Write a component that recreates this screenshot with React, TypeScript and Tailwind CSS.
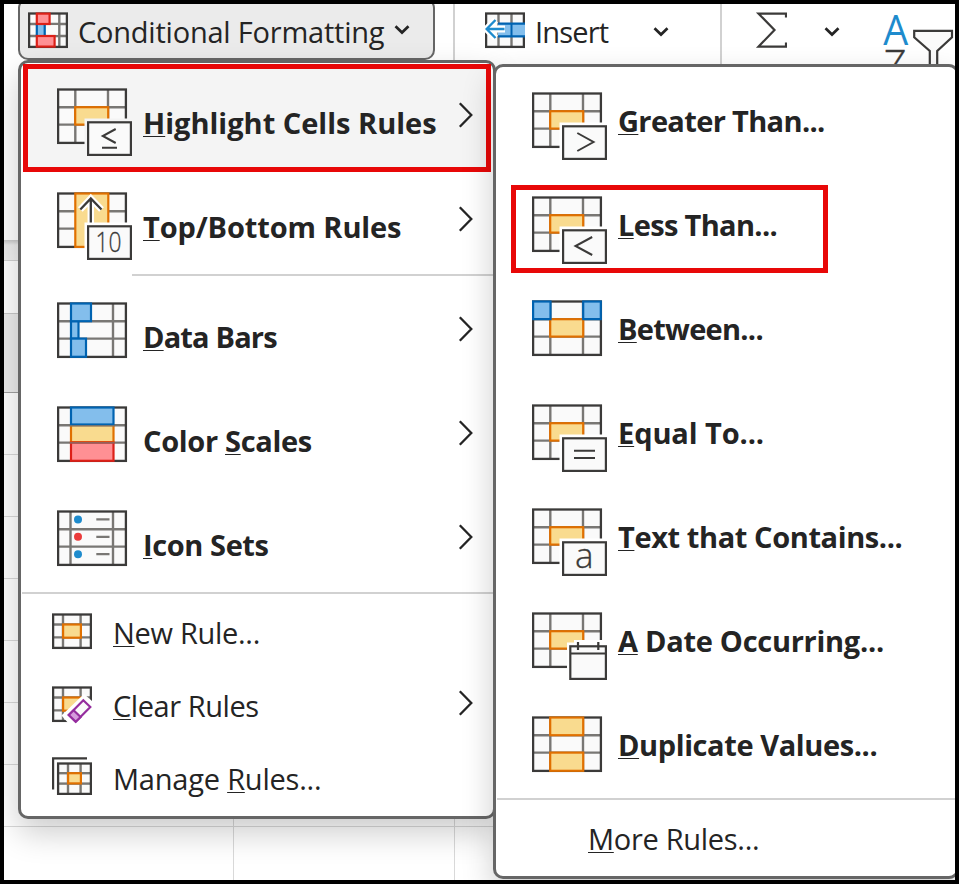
import type { ReactNode } from "react";
import { clsx } from "clsx";

const DARK = "#3b3a39";
const GRAY = "#797774";
const PAPER = "#fafafa";
const ORANGE = "#e07000";
const ORANGE_FILL = "#f9db8f";
const BLUE = "#0063b1";
const BLUE_FILL = "#83beec";
const RED = "#dc2018";
const RED_FILL = "#ff9094";

type CellProps = { x: number; y: number; w: number; h: number; stroke: string; fill: string };

function Cell({ x, y, w, h, stroke, fill }: CellProps) {
  return <rect x={x} y={y} width={w} height={h} stroke={stroke} fill={fill} strokeWidth={2.2} />;
}

// Table outline with grid lines at the given positions
function Grid({ w, h, v, hz }: { w: number; h: number; v: number[]; hz: number[] }) {
  return (
    <>
      <rect x={1.1} y={1.5} width={w - 2.2} height={h - 2.6} fill={PAPER} />
      {v.map((x) => (
        <path key={x} d={`M${x} 2V${h - 2}`} stroke={GRAY} strokeWidth={2.4} />
      ))}
      {hz.map((y) => (
        <path key={y} d={`M2 ${y}H${w - 2}`} stroke={GRAY} strokeWidth={2.4} />
      ))}
      <rect x={1.1} y={1.5} width={w - 2.2} height={h - 2.6} fill="none" stroke={DARK} strokeWidth={2.3} />
    </>
  );
}

function BigIcon({ children }: { children: ReactNode }) {
  return (
    <svg width={75} height={69} viewBox="0 0 75 69" fill="none" className="shrink-0">
      {children}
    </svg>
  );
}

function SmallIcon({ children }: { children: ReactNode }) {
  return (
    <svg width={40} height={38} viewBox="0 0 40 38" fill="none" className="shrink-0">
      {children}
    </svg>
  );
}

function RuleIcon({ children, halo = "#fff" }: { children: ReactNode; halo?: string }) {
  return (
    <BigIcon>
      <Grid w={70} h={56} v={[18.3, 51]} hz={[19.2, 36.6]} />
      <Cell x={18.2} y={19.2} w={33} h={17.4} stroke={ORANGE} fill={ORANGE_FILL} />
      <rect x={27.5} y={30.5} width={47.5} height={38.5} fill={halo} />
      <Cell x={31.1} y={34.3} w={42.8} h={32.6} stroke={DARK} fill={PAPER} />
      {children}
    </BigIcon>
  );
}

function Sign({ d }: { d: string }) {
  return <path d={d} stroke={DARK} strokeWidth={2} />;
}

function TopBottomIcon() {
  return (
    <BigIcon>
      <Grid w={70} h={56} v={[]} hz={[19.2, 36.6]} />
      <Cell x={18.3} y={1.5} w={33} h={53.4} stroke={ORANGE} fill={ORANGE_FILL} />
      <path d="M33.8 34V6.5M23.3 17.5L33.8 6.5L44.5 17.5" stroke="#fff" strokeWidth={6.5} />
      <path d="M33.8 31V6.5M23.3 17.5L33.8 6.5L44.5 17.5" stroke={DARK} strokeWidth={2.3} />
      <rect x={27.5} y={30.5} width={47.5} height={38.5} fill="#fff" />
      <Cell x={31.1} y={34.3} w={42.8} h={32.6} stroke={DARK} fill={PAPER} />
      <text x={38.5} y={60} fontSize={27} textLength={26} lengthAdjust="spacingAndGlyphs" fill={DARK} stroke={DARK} strokeWidth={0.3} className="font-light">
        10
      </text>
    </BigIcon>
  );
}

function DataBarsIcon() {
  return (
    <BigIcon>
      <Grid w={70} h={56} v={[56]} hz={[19.2, 36.6]} />
      <Cell x={14} y={19.2} w={7.5} h={17.4} stroke={BLUE} fill={BLUE_FILL} />
      <Cell x={14} y={1.5} w={20} h={17.7} stroke={BLUE} fill={BLUE_FILL} />
      <Cell x={14} y={36.6} w={15} h={18.2} stroke={BLUE} fill={BLUE_FILL} />
    </BigIcon>
  );
}

function ColorScalesIcon() {
  return (
    <BigIcon>
      <Grid w={70} h={56} v={[]} hz={[19.2, 36.6]} />
      <Cell x={14} y={19.2} w={42.5} h={17} stroke={ORANGE} fill={ORANGE_FILL} />
      <Cell x={14} y={1.5} w={42.5} h={17} stroke={BLUE} fill={BLUE_FILL} />
      <Cell x={14} y={36.6} w={42.5} h={18.2} stroke={RED} fill={RED_FILL} />
      <path d="M12.8 19.8H57.6M12.8 36.9H57.6" stroke={GRAY} strokeWidth={1.2} />
    </BigIcon>
  );
}

function IconSetsIcon() {
  return (
    <BigIcon>
      <Grid w={70} h={56} v={[13.5, 56]} hz={[19.2, 36.6]} />
      <circle cx={21} cy={9.4} r={4} fill="#1e8bcd" />
      <circle cx={21} cy={26.8} r={4} fill="#eb3b3b" />
      <circle cx={21} cy={44.2} r={4} fill="#1e8bcd" />
      <path d="M39.3 9.4H52.5M39.3 26.8H52.5M39.3 44.2H52.5" stroke={GRAY} strokeWidth={2.2} />
    </BigIcon>
  );
}

function BetweenIcon() {
  return (
    <BigIcon>
      <Grid w={70} h={56} v={[18.3, 51]} hz={[19.2, 36.6]} />
      <Cell x={18.2} y={19.2} w={33} h={17.4} stroke={ORANGE} fill={ORANGE_FILL} />
      <Cell x={1.1} y={1.5} w={17.4} h={17.6} stroke={BLUE} fill={BLUE_FILL} />
      <Cell x={51.2} y={1.5} w={17.6} h={17.6} stroke={BLUE} fill={BLUE_FILL} />
    </BigIcon>
  );
}

function DateIcon() {
  return (
    <BigIcon>
      <Grid w={70} h={56} v={[18.3, 51]} hz={[19.2, 36.6]} />
      <Cell x={18.2} y={19.2} w={33} h={17.4} stroke={ORANGE} fill={ORANGE_FILL} />
      <path d="M35 69V30.5H42V28H75V69Z" fill="#fff" />
      <Cell x={38.3} y={34.3} w={35.6} h={32.6} stroke={DARK} fill={PAPER} />
      <path d="M38 41.5H74M46 30V38M66.3 30V38" stroke={DARK} strokeWidth={2.2} />
    </BigIcon>
  );
}

function DuplicateIcon() {
  return (
    <BigIcon>
      <Grid w={70} h={56} v={[18.3, 51]} hz={[19.2, 36.6]} />
      <Cell x={18.2} y={1.5} w={33} h={17.7} stroke={ORANGE} fill={ORANGE_FILL} />
      <Cell x={18.2} y={36.6} w={33} h={18.2} stroke={ORANGE} fill={ORANGE_FILL} />
    </BigIcon>
  );
}

function NewRuleIcon() {
  return (
    <SmallIcon>
      <Grid w={40} h={36} v={[11, 28.6]} hz={[11.5, 24.4]} />
      <Cell x={11.1} y={11.5} w={17.8} h={13.2} stroke={ORANGE} fill={ORANGE_FILL} />
    </SmallIcon>
  );
}

function ClearRulesIcon() {
  return (
    <SmallIcon>
      <Grid w={40} h={36} v={[11, 28.6]} hz={[11.5, 24.4]} />
      <Cell x={11.1} y={11.5} w={17.8} h={13.2} stroke={ORANGE} fill={ORANGE_FILL} />
      <path d="M9.5 29.5L32 8L40 15V38H17Z" fill="#fff" />
      <path d="M31.3 14.3L38.3 21L23.7 35.8L16.8 29Z" fill={PAPER} stroke="#952d9e" strokeWidth={2.2} />
      <path d="M21.6 24.3L28.6 31L23.7 35.8L16.8 29Z" fill="#d59bdc" stroke="#952d9e" strokeWidth={2.2} />
    </SmallIcon>
  );
}

function ManageRulesIcon() {
  return (
    <SmallIcon>
      <path d="M1.1 32.5V1.4H35" stroke={DARK} strokeWidth={2.2} />
      <g transform="translate(5 5)">
        <Grid w={35} h={33} v={[11, 23.6]} hz={[11.2, 21.6]} />
        <Cell x={11.1} y={11.2} w={12.8} h={10.2} stroke={ORANGE} fill={ORANGE_FILL} />
      </g>
    </SmallIcon>
  );
}

function FormattingIcon() {
  return (
    <SmallIcon>
      <Grid w={40} h={36} v={[31.3]} hz={[12, 24]} />
      <rect x={8} y={13} width={9.5} height={10} fill={BLUE_FILL} />
      <path d="M8.8 12V24M16.7 12V24" stroke={BLUE} strokeWidth={2.2} />
      <rect x={18} y={13.1} width={12} height={9.8} fill={PAPER} />
      <Cell x={8.8} y={1.6} w={12.8} h={10.4} stroke={RED} fill={RED_FILL} />
      <Cell x={8.8} y={24} w={17.8} h={10.6} stroke={RED} fill={RED_FILL} />
    </SmallIcon>
  );
}

function InsertIcon() {
  return (
    <SmallIcon>
      <Grid w={40} h={36} v={[13.5, 26.5]} hz={[]} />
      <rect x={13} y={11} width={27} height={13.5} fill={BLUE_FILL} />
      <path d="M26.5 12V24" stroke={BLUE} strokeWidth={2} />
      <path d="M13 11.6H40M13 24.4H40" stroke={BLUE} strokeWidth={2.3} />
      <path d="M0 17H20M10.5 8L1.6 17L10.5 26" stroke="#fff" strokeWidth={7} />
      <path d="M1.6 17H19.5M10.5 8L1.6 17L10.5 26" stroke="#1e8bcd" strokeWidth={2.4} />
    </SmallIcon>
  );
}

function SigmaIcon() {
  return (
    <svg width={32} height={38} viewBox="0 0 32 38" fill="none" className="shrink-0">
      <path d="M31 5.5V1.6H3.5L19.5 18L3.5 34.6H31V30.5" stroke={DARK} strokeWidth={2.2} />
    </svg>
  );
}

function SortFilterIcon() {
  return (
    <svg width={72} height={56} viewBox="0 0 72 56" fill="none" className="shrink-0 overflow-visible">
      <text x={0.3} y={32.5} fontSize={42} textLength={25} lengthAdjust="spacingAndGlyphs" fill="#1e8bcd">
        A
      </text>
      <text x={0.5} y={67.5} fontSize={42} textLength={23} lengthAdjust="spacingAndGlyphs" fill={DARK} stroke={DARK} strokeWidth={0.4} className="font-light">
        Z
      </text>
      <path d="M31.2 18.8H69V25.3L54.2 39V60H46.8V39L31.2 25.3Z" fill={PAPER} stroke={DARK} strokeWidth={2.2} />
    </svg>
  );
}

function ChevronDown() {
  return (
    <svg width={16} height={12} viewBox="0 0 16 12" fill="none" className="shrink-0">
      <path d="M1.5 2.2L8 8.5L14.5 2.2" stroke="#242424" strokeWidth={2.7} />
    </svg>
  );
}

function ChevronRight({ className }: { className?: string }) {
  return (
    <svg width={16} height={26} viewBox="0 0 16 26" fill="none" className={clsx("ml-auto shrink-0", className)}>
      <path d="M1.8 1.3L13.3 13L1.8 24.7" stroke="#242424" strokeWidth={2.3} />
    </svg>
  );
}

// The letter that follows "&" is the access key and gets the underline
function Label({ text, className }: { text: string; className?: string }) {
  const at = text.indexOf("&");
  return (
    <span className={clsx("whitespace-nowrap leading-10", className)}>
      {text.slice(0, at)}
      <span className="underline decoration-1 underline-offset-2 [text-decoration-skip-ink:none]">{text[at + 1]}</span>
      {text.slice(at + 2)}
    </span>
  );
}

type Entry = { label: string; icon: ReactNode; tracking: string };

const barItems: Entry[] = [
  { label: "&Data Bars", icon: <DataBarsIcon />, tracking: "tracking-[-0.83px]" },
  { label: "Color &Scales", icon: <ColorScalesIcon />, tracking: "tracking-[-0.32px]" },
  { label: "&Icon Sets", icon: <IconSetsIcon />, tracking: "tracking-[-0.4px]" },
];

const compareItems: Entry[] = [
  { label: "&Greater Than...", icon: <RuleIcon><Sign d="M45.3 41L61.5 50L45.3 59" /></RuleIcon>, tracking: "tracking-[-0.65px]" },
  { label: "&Less Than...", icon: <RuleIcon><Sign d="M60.2 41L43.5 50L60.2 59" /></RuleIcon>, tracking: "tracking-[-0.67px]" },
  { label: "&Between...", icon: <BetweenIcon />, tracking: "tracking-[-0.72px]" },
  { label: "&Equal To...", icon: <RuleIcon><Sign d="M42 46.7H63M42 54H63" /></RuleIcon>, tracking: "tracking-[-0.1px]" },
  {
    label: "&Text that Contains...",
    icon: (
      <RuleIcon>
        <text x={43} y={60} fontSize={35} fill={DARK} stroke={DARK} strokeWidth={0.3} className="font-light">
          a
        </text>
      </RuleIcon>
    ),
    tracking: "tracking-[-0.4px]",
  },
  { label: "&A Date Occurring...", icon: <DateIcon />, tracking: "tracking-[-0.28px]" },
  { label: "&Duplicate Values...", icon: <DuplicateIcon />, tracking: "tracking-[-0.4px]" },
];

function Ribbon() {
  return (
    <div className="flex h-[236px] items-start bg-white">
      <div className="-mt-1.5 ml-3.5 flex h-[62px] w-[417px] items-start rounded-[10px] border-2 border-[#666] bg-[#ebebeb] pl-2 pt-3">
        <FormattingIcon />
        <span className="ml-2.5 w-[306px] whitespace-nowrap leading-10 tracking-[-0.22px]">Conditional Formatting</span>
        <div className="ml-2.5 mt-3">
          <ChevronDown />
        </div>
      </div>
      <div className="ml-[18px] h-16 w-0.5 bg-[#d1d1d1]" />
      <div className="ml-[30px] flex pt-2">
        <InsertIcon />
        <span className="ml-2.5 w-[118px] leading-10 tracking-[-0.8px]">Insert</span>
        <div className="mt-3.5">
          <ChevronDown />
        </div>
      </div>
      <div className="ml-[51px] h-16 w-0.5 bg-[#d1d1d1]" />
      <div className="ml-[33px] flex pt-2">
        <SigmaIcon />
        <div className="ml-[37px] mt-3.5">
          <ChevronDown />
        </div>
      </div>
      <div className="ml-[43px] pt-2">
        <SortFilterIcon />
      </div>
    </div>
  );
}

function Sheet() {
  return (
    <div className="flex flex-col">
      <div className="h-[21px] border-b border-[#d1d1d1] bg-gradient-to-b from-[#c8c8c8] via-[#ececec] via-25% to-[#f0f0f0]" />
      <div className="h-[53px] border-b border-[#c8c8c8] bg-white" />
      <div className="h-[79px] border-b border-[#a0a0a0] bg-[#ebebeb]" />
      {[0, 1, 2, 3, 4, 5, 6, 7].map((row) => (
        <div key={row} className="flex h-[62px] border-b border-[#d9d9d9]">
          <div className="w-[230px] border-r border-[#d9d9d9]" />
          <div className="w-[221px] border-r border-[#d9d9d9]" />
        </div>
      ))}
    </div>
  );
}

function FormattingMenu() {
  return (
    <div className="absolute left-3.5 top-14 flex h-[759px] w-[478px] flex-col rounded-[10px] border-[3px] border-[#666] bg-white shadow-[0_14px_32px_rgba(0,0,0,0.2)]">
      <div className="ml-0.5 mt-px flex h-[108px] w-[468px] shrink-0 items-start border-[5px] border-[#e80808] bg-[#f4f4f4] pl-[29px] pr-3 pt-[19px]">
        <RuleIcon halo="#f4f4f4">
          <Sign d="M58.7 41L45.8 48L58.7 55M45 59.7H60" />
        </RuleIcon>
        <Label text="&Highlight Cells Rules" className="ml-[11px] mt-[15px] font-bold" />
        <ChevronRight className="mt-3.5" />
      </div>
      <div className="flex h-[102px] shrink-0 items-start pl-9 pr-[19px] pt-5">
        <TopBottomIcon />
        <Label text="&Top/Bottom Rules" className="ml-[11px] mt-[15px] font-bold tracking-[-0.12px]" />
        <ChevronRight className="mt-3.5" />
      </div>
      <div className="mb-1.5 ml-[111px] h-0.5 shrink-0 bg-[#d1d1d1]" />
      <div className="flex h-[310px] shrink-0 flex-col">
        {barItems.map((item) => (
          <div key={item.label} className="flex h-[104px] shrink-0 items-start pl-9 pr-[19px] pt-5">
            {item.icon}
            <Label text={item.label} className={clsx("ml-[11px] mt-[15px] font-bold", item.tracking)} />
            <ChevronRight className="mt-3.5" />
          </div>
        ))}
      </div>
      <div className="mb-[3px] ml-px h-0.5 shrink-0 bg-[#d1d1d1]" />
      <div className="flex h-[73px] shrink-0 items-start pl-[31px] pt-4">
        <NewRuleIcon />
        <Label text="&New Rule..." className="ml-[21px] tracking-[-0.3px]" />
      </div>
      <div className="flex h-[73px] shrink-0 items-start pl-[31px] pr-[19px] pt-4">
        <ClearRulesIcon />
        <Label text="&Clear Rules" className="ml-[21px] tracking-[-0.43px]" />
        <ChevronRight className="mt-1" />
      </div>
      <div className="flex h-[73px] shrink-0 items-start pl-[31px] pt-3.5">
        <ManageRulesIcon />
        <Label text="Manage &Rules..." className="ml-[21px] mt-0.5 tracking-[-0.22px]" />
      </div>
    </div>
  );
}

function HighlightMenu() {
  return (
    <div className="absolute left-[489px] top-[60px] flex h-[815px] w-[466px] flex-col rounded-[10px] border-[3px] border-[#666] bg-white shadow-[0_14px_32px_rgba(0,0,0,0.2)]">
      <div className="flex h-[731px] shrink-0 flex-col pt-[5px]">
        {compareItems.map((item) => (
          <div key={item.label} className="flex h-[104px] shrink-0 items-start pl-9 pt-5">
            {item.icon}
            <Label text={item.label} className={clsx("ml-[11px] mt-[9px] font-bold", item.tracking)} />
          </div>
        ))}
      </div>
      <div className="ml-px h-0.5 shrink-0 bg-[#d1d1d1]" />
      <Label text="&More Rules..." className="ml-[92px] mt-[19px] tracking-[-0.3px]" />
      {/* callout around "Less Than..." */}
      <div className="absolute left-[15px] top-[118px] h-[88px] w-[317px] border-[5px] border-[#e80808]" />
    </div>
  );
}

export default function App() {
  return (
    <div className="relative h-[884px] w-[959px] overflow-hidden border-4 border-black bg-white font-['Open_Sans','Noto_Sans',sans-serif] text-[29px] text-[#242424]">
      <Ribbon />
      <Sheet />
      <FormattingMenu />
      <HighlightMenu />
    </div>
  );
}
